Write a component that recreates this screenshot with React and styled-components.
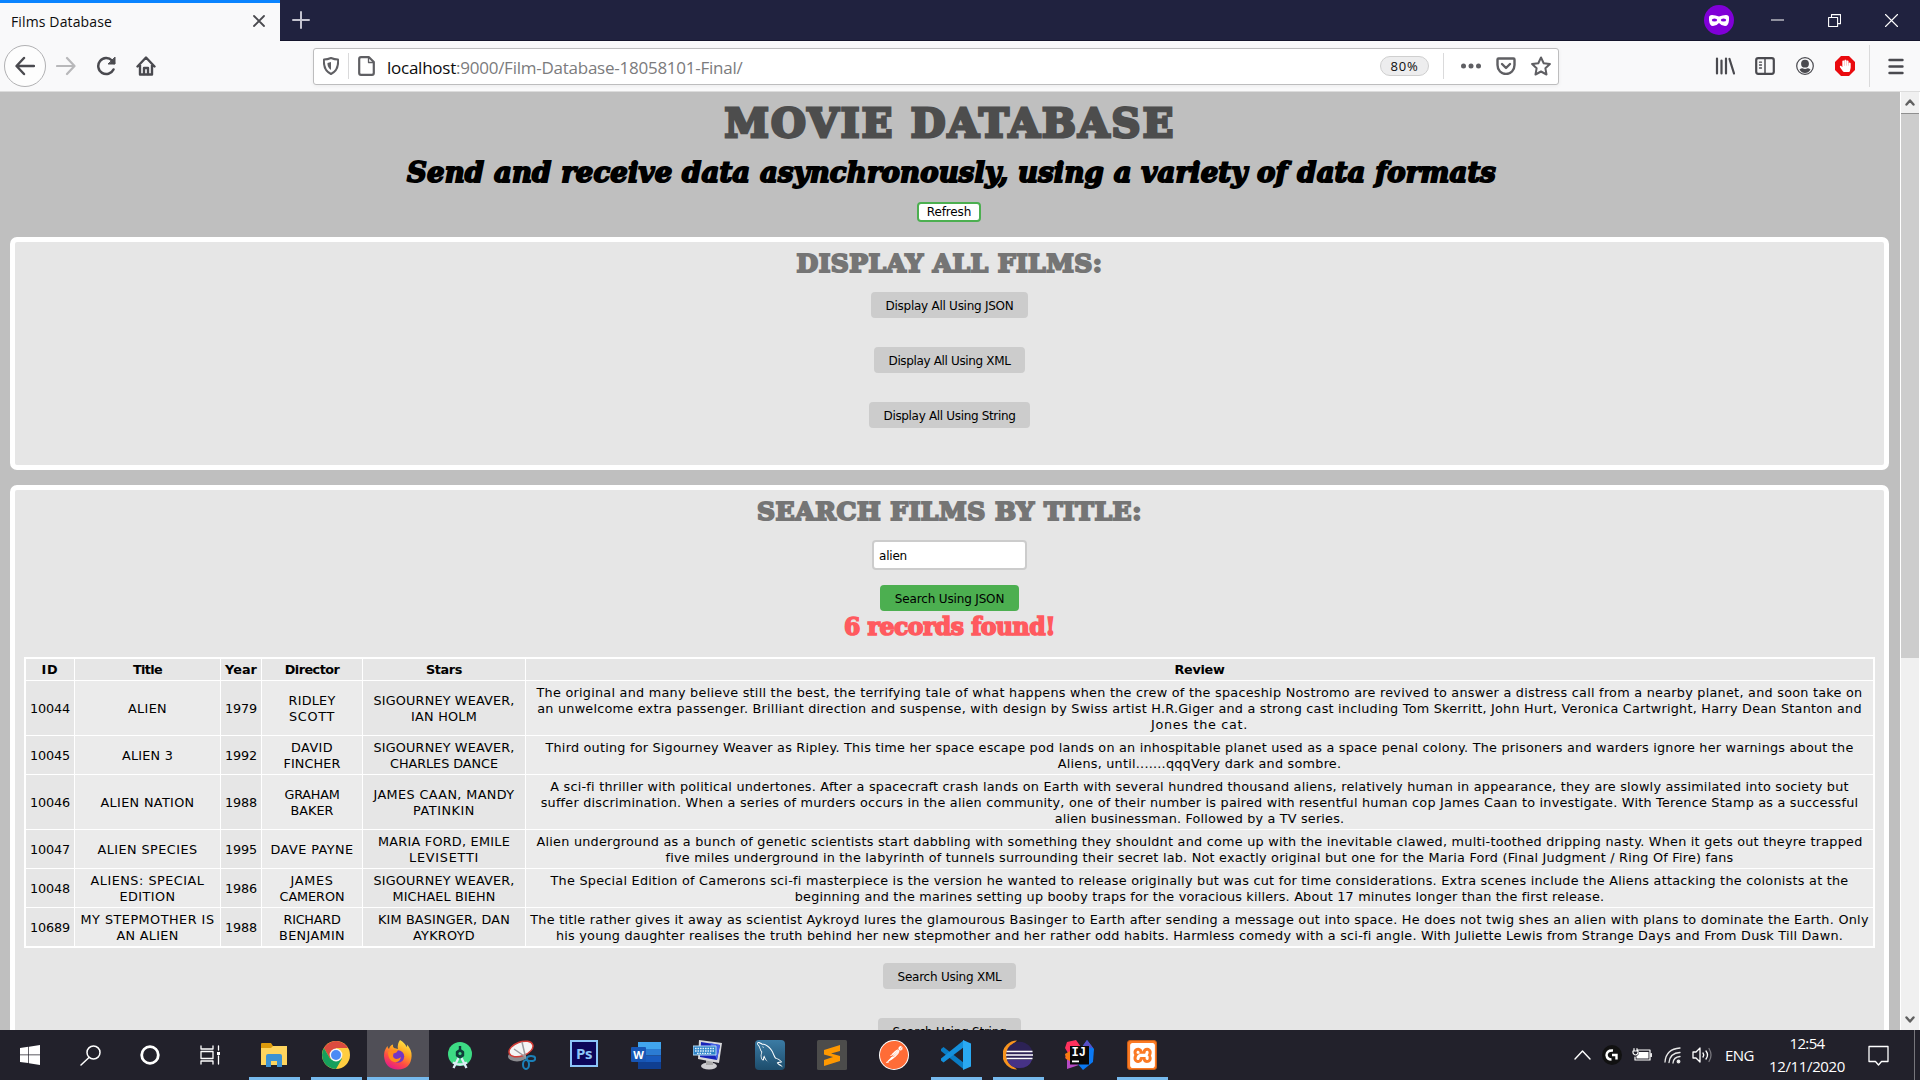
import React, { useLayoutEffect, useRef, useState } from "react";
import styled, { createGlobalStyle } from "styled-components";
import { SiXampp, SiPostman } from "react-icons/si";
import { GrMysql } from "react-icons/gr";
import { FaHandPaper } from "react-icons/fa";

const GlobalStyle = createGlobalStyle`
  * { box-sizing: border-box; }
  body { margin: 0; overflow: hidden; }
  svg { display: block; flex: none; }
`;

const ui = `"Open Sans", "Noto Sans", sans-serif`;
const verdana = `"DejaVu Sans", Verdana, sans-serif`;
const slab = `"DejaVu Serif", serif`;

const Screen = styled.div`
  width: 1920px;
  height: 1080px;
  display: flex;
  flex-direction: column;
  overflow: hidden;
  background: #bfbfbf;
  font-family: ${ui};
`;

const Row = styled.div`
  display: flex;
  align-items: center;
`;

const Slot = styled.div`
  width: ${(p) => p.$w || 40}px;
  height: 100%;
  flex: none;
  display: flex;
  align-items: center;
  justify-content: center;
`;

const Spacer = styled.div`
  flex: ${(p) => (p.$w ? `0 0 ${p.$w}px` : "1")};
`;

const TabBar = styled(Row)`
  height: 41px;
  flex: none;
  background: #20223f;
  border-bottom: 1px solid #14152c;
`;

const Tab = styled.div`
  width: 280px;
  height: 41px;
  align-self: flex-start;
  border-top: 3px solid #0a84ff;
  background: #f9f9fa;
  display: flex;
  align-items: center;
  justify-content: space-between;
  padding: 0 15px 2px 11px;
  font-size: 14px;
  color: #0c0c0d;
`;

const Toolbar = styled(Row)`
  height: 51px;
  flex: none;
  background: #f9f9fa;
  border-bottom: 1px solid #dcdcdc;
  padding-left: 4px;
`;

const BackCircle = styled.div`
  width: 42px;
  height: 42px;
  border: 1px solid #b1b1b3;
  border-radius: 50%;
  background: #fdfdfd;
  display: flex;
  align-items: center;
  justify-content: center;
`;

const UrlBar = styled.div`
  width: 1246px;
  height: 37px;
  border: 1px solid #bdbdbe;
  border-radius: 3px;
  background: #fff;
  box-shadow: 0 1px 4px rgba(0, 0, 0, 0.06);
  display: flex;
  align-items: center;
`;

const Url = styled.div`
  font-size: 17px;
  line-height: 24px;
  color: #7b7b7d;
  padding-top: 3px;
  b {
    font-weight: 400;
    color: #0c0c0d;
  }
`;

const Zoom = styled.div`
  width: 49px;
  height: 20px;
  border: 1px solid #cfcfcf;
  border-radius: 10px;
  background: #ededee;
  font-size: 13px;
  line-height: 19px;
  text-align: center;
  color: #0c0c0d;
`;

const Divider = styled.div`
  width: 1px;
  height: ${(p) => p.$h}px;
  background: ${(p) => p.$c || "#dadadb"};
`;

const Viewport = styled.div`
  height: 938px;
  flex: none;
  display: flex;
  overflow: hidden;
`;

const Page = styled.main`
  width: 1900px;
  height: 938px;
  overflow: hidden;
  background: #bfbfbf;
  font-family: ${verdana};
  font-size: 12.8px;
  color: #000;
  display: flex;
  flex-direction: column;
  align-items: center;
`;

const Title = styled.h1`
  margin: 0;
  height: 61px;
  flex: none;
  font: 700 40px/61px ${slab};
  color: #4d4d4d;
  -webkit-text-stroke: 3px #4d4d4d;
`;

const Subtitle = styled.h2`
  margin: 0 0 0 3px;
  height: 40px;
  flex: none;
  font: italic 700 27.5px/39px ${slab};
  color: #000;
  -webkit-text-stroke: 1.9px #000;
`;

const Refresh = styled.button`
  margin: 9px 2px 15px 0;
  width: 64px;
  height: 20px;
  flex: none;
  padding: 1px 0 0;
  border: 2px solid #4caf50;
  border-radius: 4px;
  background: #fff;
  font: 12px/15px ${verdana};
  color: #000;
`;

const Panel = styled.section`
  width: 1879px;
  height: ${(p) => p.$h}px;
  flex: none;
  margin: 0 0 15px -1px;
  border: 5px solid #fff;
  border-radius: 7px;
  background: #e6e6e6;
  display: flex;
  flex-direction: column;
  align-items: center;
`;

const PanelTitle = styled.h3`
  margin: 0 0 7px;
  height: 43px;
  flex: none;
  font: 700 25px/44px ${slab};
  color: #757575;
  -webkit-text-stroke: 2px #757575;
`;

const Found = styled.h3`
  margin: 2px 0 14px;
  height: 30px;
  flex: none;
  font: 700 23.5px/29px ${slab};
  color: #ff5a5f;
  -webkit-text-stroke: 1.6px #ff5a5f;
`;

const Action = styled.button`
  width: ${(p) => p.$w}px;
  height: 26px;
  flex: none;
  margin-bottom: ${(p) => (p.$active ? 0 : 29)}px;
  padding: 1px 0 0;
  border: 0;
  border-radius: 4px;
  background: ${(p) => (p.$active ? "#4caf50" : "#cccccc")};
  font: 12px/16px ${verdana};
  color: #000;
`;

const SearchInput = styled.div`
  width: 155px;
  height: 30px;
  flex: none;
  margin-bottom: 15px;
  padding: 1px 0 0 5px;
  border: 2px solid #ccc;
  border-radius: 4px;
  background: #fff;
  font: 12px/26px ${verdana};
`;

const Table = styled.table`
  width: 1851px;
  flex: none;
  margin-bottom: 15px;
  table-layout: fixed;
  border: 1px solid #fff;
  border-spacing: 1px;
  background: #fff;
  font: 12.8px/16px ${verdana};
  text-align: center;
`;

const Th = styled.th`
  height: 21px;
  padding: 1px 0 0;
  background: #e6e6e6;
`;

const Td = styled.td`
  height: ${(p) => p.$h}px;
  padding: 1px 0 0;
  background: ${(p) => (p.$odd ? "#ebebeb" : "#e6e6e6")};
`;

const Line = styled.span`
  display: block;
  width: max-content;
  margin: 0 auto;
  white-space: nowrap;
`;

const InlineLine = styled(Line)`
  display: inline-block;
  margin: 0;
`;

/* Spreads its text over the given width by adjusting the tracking. */
function Fit({ w, inline, children }) {
  const ref = useRef(null);
  const [ls, setLs] = useState(0);
  useLayoutEffect(() => {
    const el = ref.current;
    const n = el.textContent.length;
    el.style.letterSpacing = "0px";
    const natural = el.getBoundingClientRect().width;
    const value = (w - natural) / n;
    el.style.letterSpacing = `${value}px`;
    setLs(value);
  }, [w]);
  const Tag = inline ? InlineLine : Line;
  return (
    <Tag ref={ref} style={{ letterSpacing: `${ls}px` }}>
      {children}
    </Tag>
  );
}

const Scrollbar = styled.div`
  width: 20px;
  height: 938px;
  flex: none;
  border-left: 1px solid #fff;
  border-right: 1px solid #fff;
  background: #f0f0f0;
  display: flex;
  flex-direction: column;
`;

const ScrollButton = styled.div`
  height: 21px;
  display: flex;
  align-items: center;
  justify-content: center;
  background: #f0f0f0;
`;

const Thumb = styled.div`
  height: 545px;
  margin-bottom: auto;
  background: #cdcdcd;
  border-top: 1px solid #8f8f8f;
`;

const Taskbar = styled(Row)`
  height: 50px;
  flex: none;
  background: #22212b;
  color: #fff;
`;

const AppSlot = styled.div`
  width: 62px;
  height: 50px;
  flex: none;
  display: flex;
  flex-direction: column;
  align-items: center;
  background: ${(p) => (p.$active ? "#504f57" : "transparent")};
`;

const AppIcon = styled.div`
  height: 47px;
  padding-top: 3px;
  display: flex;
  align-items: center;
`;

const Running = styled.div`
  width: ${(p) => (p.$active ? 62 : 51)}px;
  height: 3px;
  background: #76b9ed;
`;

const Tile = styled.div`
  width: 30px;
  height: 30px;
  display: flex;
  align-items: center;
  justify-content: center;
  border-radius: ${(p) => p.$r || 0};
  background: ${(p) => p.$bg};
  border: ${(p) => p.$line || "0"};
  color: ${(p) => p.$fg || "#fff"};
`;

const PsTile = styled.div`
  width: 28px;
  height: 27px;
  margin-bottom: 3px;
  border: 2px solid #8cc5f8;
  background: #0c0659;
  color: #8cc5f8;
  font: 700 15px/22px "Open Sans", sans-serif;
  text-align: center;
  letter-spacing: -0.5px;
`;

const Lang = styled.div`
  width: 28px;
  font-size: 15px;
  margin-left: 9px;
`;

const Clock = styled.div`
  width: 76px;
  margin-left: 16px;
  font-size: 15px;
  line-height: 23px;
  text-align: center;
`;

const S = ({ w = 20, h, vb, children, sw = 2, c = "#4a4a4f" }) => (
  <svg width={w} height={h || w} viewBox={vb || `0 0 ${w} ${h || w}`} fill="none" stroke={c} strokeWidth={sw} strokeLinecap="round" strokeLinejoin="round">
    {children}
  </svg>
);

const films = [
  [54, [["10044", 40]], [["ALIEN", 39]], [["1979", 32]], [["RIDLEY", 47], ["SCOTT", 46]],
    [["SIGOURNEY WEAVER,", 141], ["IAN HOLM", 66]],
    [["The original and many believe still the best, the terrifying tale of what happens when the crew of the spaceship Nostromo are revived to answer a distress call from a nearby planet, and soon take on", 1326],
      ["an unwelcome extra passenger. Brilliant direction and suspense, with design by Swiss artist H.R.Giger and a strong cast including Tom Skerritt, John Hurt, Veronica Cartwright, Harry Dean Stanton and", 1324.5],
      ["Jones the cat.", 97]]],
  [38, [["10045", 40]], [["ALIEN 3", 51]], [["1992", 32]], [["DAVID", 42], ["FINCHER", 57]],
    [["SIGOURNEY WEAVER,", 141], ["CHARLES DANCE", 108]],
    [["Third outing for Sigourney Weaver as Ripley. This time her space escape pod lands on an inhospitable planet used as a space penal colony. The prisoners and warders ignore her warnings about the", 1308],
      ["Aliens, until.......qqqVery dark and sombre.", 283.5]]],
  [54, [["10046", 40]], [["ALIEN NATION", 94]], [["1988", 32]], [["GRAHAM", 55], ["BAKER", 43]],
    [["JAMES CAAN, MANDY", 141], ["PATINKIN", 62]],
    [["A sci-fi thriller with political undertones. After a spacecraft crash lands on Earth with several hundred thousand aliens, relatively human in appearance, they are slowly assimilated into society but", 1298.5],
      ["suffer discrimination. When a series of murders occurs in the alien community, one of their number is paired with resentful human cop James Caan to investigate. With Terence Stamp as a successful", 1317.5],
      ["alien businessman. Followed by a TV series.", 289.5]]],
  [38, [["10047", 40]], [["ALIEN SPECIES", 100]], [["1995", 32]], [["DAVE PAYNE", 83]],
    [["MARIA FORD, EMILE", 132], ["LEVISETTI", 70]],
    [["Alien underground as a bunch of genetic scientists start dabbling with something they shouldnt and come up with the inevitable clawed, multi-toothed dripping nasty. When it gets out theyre trapped", 1326],
      ["five miles underground in the labyrinth of tunnels surrounding their secret lab. Not exactly original but one for the Maria Ford (Final Judgment / Ring Of Fire) fans", 1068]]],
  [38, [["10048", 40]], [["ALIENS: SPECIAL", 114], ["EDITION", 56]], [["1986", 32]], [["JAMES", 43], ["CAMERON", 65]],
    [["SIGOURNEY WEAVER,", 141], ["MICHAEL BIEHN", 103]],
    [["The Special Edition of Camerons sci-fi masterpiece is the version he wanted to release originally but was cut for time considerations. Extra scenes include the Aliens attacking the colonists at the", 1298],
      ["beginning and the marines setting up booby traps for the voracious killers. About 17 minutes longer than the first release.", 809.5]]],
  [38, [["10689", 40]], [["MY STEPMOTHER IS", 134], ["AN ALIEN", 62]], [["1988", 32]], [["RICHARD", 57], ["BENJAMIN", 66]],
    [["KIM BASINGER, DAN", 132], ["AYKROYD", 62]],
    [["The title rather gives it away as scientist Aykroyd lures the glamourous Basinger to Earth after sending a message out into space. He does not twig shes an alien with plans to dominate the Earth. Only", 1338.5],
      ["his young daughter realises the truth behind her new stepmother and her rather odd habits. Harmless comedy with a sci-fi angle. With Juliette Lewis from Strange Days and From Dusk Till Dawn.", 1287]]],
];
const heads = [["ID", 17], ["Title", 29], ["Year", 32], ["Director", 54.5], ["Stars", 36], ["Review", 50]];
const colWidths = [48, 145, 40, 100, 162, 1347];

const Explorer = () => (
  <svg width="28" height="26" viewBox="0 0 28 26">
    <path d="M1 2q0-1 1-1h9l2 3h13v6H1z" fill="#dd9b0c" />
    <path d="M1 6h10l2-2h14v19H1z" fill="#ffd55e" />
    <path d="M6 25V14q0-2 2-2h12q2 0 2 2v11h-5v-6h-6v6z" fill="#3c92d4" />
  </svg>
);
const Chrome = () => (
  <svg width="28" height="28" viewBox="0 0 28 28">
    <circle cx="14" cy="14" r="14" fill="#ffcd40" />
    <path d="M14 14 8 17.5 1.9 7A14 14 0 0 1 26.1 7H14z" fill="#db4b3f" />
    <path d="M1.9 7A14 14 0 0 0 14 28l6-10.5H8z" fill="#169f5c" />
    <circle cx="14" cy="14" r="6.4" fill="#f5f5f5" />
    <circle cx="14" cy="14" r="5" fill="#4a8af4" />
  </svg>
);
const Firefox = () => (
  <svg width="30" height="30" viewBox="0 0 30 30">
    <defs>
      <linearGradient id="fx" x1=".8" y1="0" x2=".3" y2="1">
        <stop offset="0" stopColor="#fff04a" /><stop offset=".4" stopColor="#ffa322" /><stop offset=".7" stopColor="#ff4a45" /><stop offset="1" stopColor="#e0188f" />
      </linearGradient>
    </defs>
    <path d="M17 0q5 3 6.500 7 1-1 .5-2.500Q29 10 28.600 16 28 29 15 29.600 2 29 1 16 1 10 4.500 6q0 2 1.500 3 1-4 4-4.500-.5 2 1 3.500l4 1Q14 4 17 0z" fill="url(#fx)" />
    <circle cx="15" cy="16.500" r="6.200" fill="#7436c4" />
    <path d="M5 12q4-3 10-2-1 3-4.500 3.500Q9 18 13 19q3 0 5-2-1 6-7 5-6-2-6-10z" fill="#ff8b1c" />
  </svg>
);
const AndroidStudio = () => (
  <svg width="26" height="30" viewBox="0 0 26 30">
    <circle cx="13" cy="14" r="12" fill="#3ddc84" />
    <path d="M13 6v4M13 10l3 2v3.500l-3 2-3-2V12z" fill="#0f4d3a" stroke="#0f3d3a" strokeWidth="2.400" strokeLinejoin="round" />
    <circle cx="13" cy="13.500" r="1.500" fill="#3ddc84" />
    <path d="M11.500 18 6.500 28M14.500 18l5 10M6 22.500q7 4 14 0" stroke="#dcecf5" strokeWidth="2.300" fill="none" />
  </svg>
);
const Snip = () => (
  <svg width="28" height="30" viewBox="0 0 28 30">
    <ellipse cx="9" cy="16.500" rx="9" ry="5" fill="#8c8c90" />
    <ellipse cx="13" cy="9" rx="12.500" ry="7" transform="rotate(-20 13 9)" fill="#f4f4f4" stroke="#d23b35" strokeWidth="1.500" />
    <path d="M14 2 18 19M6 9 19 18" stroke="#9a9a9e" strokeWidth="1.500" />
    <ellipse cx="23" cy="18.500" rx="4.200" ry="2.600" fill="none" stroke="#1b80b8" strokeWidth="2" />
    <ellipse cx="18" cy="24.500" rx="3" ry="4.500" fill="none" stroke="#1b80b8" strokeWidth="2" />
  </svg>
);
const Word = () => (
  <svg width="30" height="27" viewBox="0 0 30 27">
    <path d="M7 0h23v7H7z" fill="#41a5ee" /><path d="M7 7h23v6.500H7z" fill="#2b7cd3" />
    <path d="M7 13.500h23V20H7z" fill="#185abd" /><path d="M7 20h23v7H7z" fill="#103f91" />
    <rect y="5" width="15" height="15" rx="1" fill="#1756b5" />
    <text x="7.500" y="16.500" textAnchor="middle" fontSize="11" fontWeight="700" fontFamily="Open Sans" fill="#fff">W</text>
  </svg>
);
const Keyboard = () => (
  <svg width="30" height="30" viewBox="0 0 30 30">
    <ellipse cx="16" cy="26" rx="8" ry="3.500" fill="#cfcfd2" /><path d="M13 20h7v5h-7z" fill="#aaa" />
    <path d="m6 0 23 3-3 20L5 19z" fill="#d7d7da" /><path d="m8 2 19 3-3 15L7 17z" fill="#1723b8" />
    <path d="m17 3 10 2-3 15z" fill="#4260e6" />
    <path d="M0 6h23v9H0z" fill="#2c83c7" stroke="#b8dbf3" />
    <path d="M2 8.500h19M2 11h19M4 13.300h15" stroke="#e3f1fb" strokeWidth="1.300" strokeDasharray="1.600 .9" />
  </svg>
);
const Sublime = () => (
  <svg width="30" height="30" viewBox="0 0 30 30">
    <rect width="30" height="30" rx="1.500" fill="#4c4c4b" />
    <path d="m7 10 16-5v6l-9 2.500 9 2.500v5L7 26v-6l9-3-9-2.500z" fill="#ff9800" />
  </svg>
);
const VSCode = () => (
  <svg width="30" height="30" viewBox="0 0 30 30">
    <path d="m0 9 2.500-2L23 23v6.500L0 11z" fill="#0a7cc4" />
    <path d="m0 20.500 2.500 2L23 7V0L0 18.500z" fill="#1490dc" />
    <path d="M22 0l8 3.500v23L22 30z" fill="#2aa9f2" />
  </svg>
);
const Eclipse = () => (
  <svg width="30" height="30" viewBox="0 0 30 30">
    <path d="M14 0.500a14.500 14.500 0 0 0 0 29Q-4 15 14 .5z" fill="#f7941e" />
    <circle cx="16.500" cy="15" r="13.300" fill="#2c2255" />
    <path d="M4 20h25q-3 8-12.500 8T4 20z" fill="#463286" />
    <path d="M3.500 11.500h26M3 15h27M3.500 18.500h26" stroke="#fff" strokeWidth="1.700" />
  </svg>
);
const IntelliJ = () => (
  <svg width="30" height="30" viewBox="0 0 30 30">
    <path d="m2 2 9-2 5 7-9 15-7-4 3-5-3-5z" fill="#fe315d" /><path d="m2 20 5-5 7 10-12 4z" fill="#b74ac4" />
    <path d="m0 14 5-3v10l-4-2z" fill="#f97a12" />
    <path d="m17 7 5-7 7 9-1 13-10 8-6-7z" fill="#0b79f3" /><path d="m17 7 5-7 6 8z" fill="#5a4fc6" />
    <path d="M5 6h19v18.500H5z" fill="#080808" />
    <text x="6.500" y="16" fontSize="12" fontWeight="700" fontFamily="Liberation Mono" fill="#fff">IJ</text>
    <path d="M7 20.500h7v1.800H7z" fill="#fff" />
  </svg>
);

const apps = [
  [<Explorer />, 1], [<Chrome />, 1], [<Firefox />, 1, 1], [<AndroidStudio />], [<Snip />],
  [<PsTile>Ps</PsTile>], [<Word />], [<Keyboard />],
  [<Tile $bg="linear-gradient(#3b7ba4,#1d4d6c)" $r="4px"><GrMysql size={26} /></Tile>],
  [<Sublime />],
  [<Tile $bg="#fff" $r="50%" $fg="#ff6c37"><SiPostman size={28} /></Tile>],
  [<VSCode />, 1], [<Eclipse />, 1], [<IntelliJ />],
  [<Tile $bg="#fb7a24" $r="3px" $line="1px solid #c95e16"><SiXampp size={25} /></Tile>, 1],
];

export default function App() {
  return (
    <Screen>
      <GlobalStyle />
      <TabBar>
        <Tab>
          <Fit w={101}>Films Database</Fit>
          <Spacer />
          <S w={12} sw={1.8}><path d="M1 1l10 10M11 1 1 11" /></S>
        </Tab>
        <Slot $w={42}><S w={18} c="#c4c4d0"><path d="M9 1v16M1 9h16" /></S></Slot>
        <Spacer />
        <Slot $w={32}>
          <svg width="30" height="30" viewBox="0 0 30 30">
            <circle cx="15" cy="15" r="15" fill="#8000d7" />
            <path d="M5 12.500q0-2.500 3-2.500 3.500 0 7 1.500 3.500-1.500 7-1.500 3 0 3 2.500V15q-.5 6-4 6-3.500 0-6-3-2.500 3-6 3-3.500 0-4-6z" fill="#fff" />
            <ellipse cx="10.500" cy="15" rx="2.700" ry="1.500" fill="#8000d7" /><ellipse cx="19.500" cy="15" rx="2.700" ry="1.500" fill="#8000d7" />
          </svg>
        </Slot>
        <Spacer $w={14} />
        <Slot $w={57}><S w={13} sw={1.200} c="#fff"><path d="M.5 6h12" /></S></Slot>
        <Slot $w={57}><S w={13} sw={1.100} c="#fff"><path d="M.6 3.500h9v9h-9zM3.500 3.500V.6h9v9h-3" /></S></Slot>
        <Slot $w={57}><S w={13} sw={1.100} c="#fff"><path d="M.5.5l12 12M12.500.5l-12 12" /></S></Slot>
      </TabBar>
      <Toolbar>
        <BackCircle><S w={20} sw={2.400}><path d="M19 10H2M9 2 1.500 10 9 18" /></S></BackCircle>
        <Slot><S w={20} sw={2.200} c="#b8b8ba"><path d="M1 10h17M11 2l7.500 8-7.500 8" /></S></Slot>
        <Slot><S w={20} sw={2.500}><path d="M17.500 13.500A8 8 0 1 1 16 4.500L18 7" /><path d="M19 1.500V8h-6.500z" fill="#4a4a4f" strokeWidth="1" /></S></Slot>
        <Slot><S w={20} sw={2.400}><path d="M1.500 10.500 10 1.500l8.500 9M4 9v9.500h12V9" /><path d="M8 18v-6h4v6" /></S></Slot>
        <Spacer $w={147} />
        <UrlBar>
          <Slot $w={34}><S w={16} h={18} c="#5f5f63"><path d="M8 1q3.500 1.500 7 1.500Q16 13 8 17 0 13 1 2.500 4.500 2.500 8 1z" /><path d="M8 5v8q-4-3-3.500-7z" fill="#5f5f63" stroke="none" /></S></Slot>
          <Divider $h={26} />
          <Slot $w={35}><S w={17} h={20} c="#5f5f63" sw={2.200}><path d="M3 1.200h8L15.800 6v11q0 1.800-1.800 1.800H3q-1.800 0-1.800-1.800V3Q1.200 1.200 3 1.200z" /><path d="M10.500 2v4.500H15" strokeWidth="1.300" /></S></Slot>
          <Spacer $w={3} />
          <Url><Fit w={355.5}><b>localhost</b>:9000/Film-Database-18058101-Final/</Fit></Url>
          <Spacer />
          <Zoom><Fit w={28}>80%</Fit></Zoom>
          <Spacer $w={14} />
          <Divider $h={26} />
          <Spacer $w={9} />
          <Slot $w={35}><svg width="22" height="6" fill="#5f5f63"><circle cx="3.500" cy="3" r="2.500" /><circle cx="11" cy="3" r="2.500" /><circle cx="18.500" cy="3" r="2.500" /></svg></Slot>
          <Slot $w={35}><S w={20} h={18} c="#5f5f63" sw={2.400}><path d="M2.500 1.500h15q1 0 1 1V8q0 4-2.500 6.500T10 17t-6-2.500Q1.500 12 1.500 8V2.500q0-1 1-1z" /><path d="m6 7 4 4 4-4" /></S></Slot>
          <Slot $w={35}><S w={20} c="#5f5f63"><path d="m10 1.500 2.700 5.700 6.200.8-4.500 4.300 1.100 6.200L10 15.500l-5.500 3 1.100-6.200L1.100 8l6.200-.8z" /></S></Slot>
        </UrlBar>
        <Spacer $w={146} />
        <Slot><S w={20} h={18} sw={2.200}><path d="M2 1.500v15M6.500 3.500v13M11 1.500v15M14.500 2 19 16.500" /></S></Slot>
        <Slot><S w={20} h={18} sw={2.200}><rect x="1.200" y="1.200" width="17.600" height="15.600" rx="2" /><path d="M10 1.500v15" strokeWidth="1.500" /><path d="M4.500 5.200h2M4.500 8h2M4.500 11h2" strokeWidth="1.300" /></S></Slot>
        <Slot><svg width="18" height="18" viewBox="0 0 18 18"><circle cx="9" cy="9" r="8.300" fill="none" stroke="#4a4a4f" strokeWidth="1.200" /><circle cx="9" cy="6.700" r="3.900" fill="#4a4a4f" /><path d="M3.500 12.500q2-1.500 3-1.200 2.500 1.200 5 0 1-.3 3 1.200Q12.500 16 9 16t-5.500-3.500z" fill="#4a4a4f" /></svg></Slot>
        <Slot>
          <svg width="20" height="20" viewBox="0 0 20 20">
            <path d="M6 0h8l6 6v8l-6 6H6l-6-6V6z" fill="#ea0a0e" />
            <FaHandPaper x="4" y="3.500" size={12.500} color="#fff" />
          </svg>
        </Slot>
        <Spacer $w={4} />
        <Divider $h={42} />
        <Spacer $w={6} />
        <Slot><S w={16} h={17} sw={2.400}><path d="M1.500 2h13M1.500 8.500h13M1.500 15h13" /></S></Slot>
      </Toolbar>
      <Viewport>
        <Page>
          <Title><Fit w={451}>MOVIE DATABASE</Fit></Title>
          <Subtitle><Fit w={1089}>Send and receive data asynchronously, using a variety of data formats</Fit></Subtitle>
          <Refresh><Fit w={44.5}>Refresh</Fit></Refresh>
          <Panel $h={233}>
            <PanelTitle><Fit w={306}>DISPLAY ALL FILMS:</Fit></PanelTitle>
            <Action $w={157}><Fit w={128}>Display All Using JSON</Fit></Action>
            <Action $w={151}><Fit w={122}>Display All Using XML</Fit></Action>
            <Action $w={161}><Fit w={132}>Display All Using String</Fit></Action>
          </Panel>
          <Panel $h={620}>
            <PanelTitle><Fit w={385}>SEARCH FILMS BY TITLE:</Fit></PanelTitle>
            <SearchInput><Fit inline w={28}>alien</Fit></SearchInput>
            <Action $w={139} $active><Fit w={109.5}>Search Using JSON</Fit></Action>
            <Found><Fit w={211}>6 records found!</Fit></Found>
            <Table>
              <colgroup>{colWidths.map((w) => <col key={w} width={w} />)}</colgroup>
              <thead>
                <tr>{heads.map(([t, w]) => <Th key={t}><Fit w={w}>{t}</Fit></Th>)}</tr>
              </thead>
              <tbody>
                {films.map(([h, ...cells]) => (
                  <tr key={cells[0][0][0]}>
                    {cells.map((lines, i) => (
                      <Td key={i} $h={h} $odd={i % 2 === 1}>
                        {lines.map(([t, w]) => <Fit key={t} w={w}>{t}</Fit>)}
                      </Td>
                    ))}
                  </tr>
                ))}
              </tbody>
            </Table>
            <Action $w={133}><Fit w={104}>Search Using XML</Fit></Action>
            <Action $w={143}><Fit w={114}>Search Using String</Fit></Action>
          </Panel>
        </Page>
        <Scrollbar>
          <ScrollButton><S w={10} h={7} c="#606060" sw={2.400}><path d="m1.500 5.500 3.500-4 3.500 4" /></S></ScrollButton>
          <Thumb />
          <ScrollButton><S w={10} h={7} c="#606060" sw={2.400}><path d="m1.500 1.500 3.500 4 3.500-4" /></S></ScrollButton>
        </Scrollbar>
      </Viewport>
      <Taskbar>
        <Slot $w={60}><svg width="20" height="20" viewBox="0 0 20 20" fill="#fff"><path d="M0 3l8.300-1.200v7.700H0zM9 1.700 20 0v9.500H9zM0 10.300h8.300V18L0 17zM9 10.300h11V20L9 18.300z" /></svg></Slot>
        <Slot $w={60}><S w={21} c="#fff" sw={1.500}><circle cx="13.500" cy="7.500" r="6.500" /><path d="M9 12.500 1 20" /></S></Slot>
        <Slot $w={60}><S w={20} c="#fff" sw={2.800}><circle cx="10" cy="10" r="8.300" /></S></Slot>
        <Slot $w={60}><S w={21} h={20} c="#fff" sw={1.300}><path d="M1 1v3h12V1M1 19v-3h12v3M1 6.500h12v7H1zM18.500 1v4M18.500 11v8" /><path d="M17 7h3v3h-3z" fill="#fff" stroke="none" /></S></Slot>
        <Spacer $w={3} />
        {apps.map(([icon, running, active], i) => (
          <AppSlot key={i} $active={active}>
            <AppIcon>{icon}</AppIcon>
            {running && <Running $active={active} />}
          </AppSlot>
        ))}
        <Spacer />
        <Slot $w={30}><S w={17} h={10} c="#fff" sw={1.400}><path d="m1 9 7.500-8L16 9" /></S></Slot>
        <Slot $w={30}><svg width="20" height="20" viewBox="0 0 20 20"><circle cx="10" cy="10" r="10" fill="#111" /><path d="M11 5.500Q5 5 4.500 10q.5 4.500 5 4.500M10 10h4.500v4.500" fill="none" stroke="#fff" strokeWidth="2.400" /></svg></Slot>
        <Slot $w={30}><S w={20} h={14} c="#fff" sw={1.200}><path d="M5 2h13v10H3V9M19.300 5.500v3M2 .7v2M5 .7v2M1 3h5v2q-1 2-2.500 2T1 5z" /><path d="M7 4h9.500v6.500h-12V8Q7 7 7 4z" fill="#fff" stroke="none" /></S></Slot>
        <Slot $w={31}><S w={17} h={17} c="#e8e8e8" sw={1.300}><path d="M1 15Q2 2 16 1M5 15.500Q6 6 16 5.500M9 16q.500-6 7-6.500" /><circle cx="14.500" cy="14.500" r="1.300" fill="#fff" /></S></Slot>
        <Slot $w={28}><S w={21} h={18} c="#fff" sw={1.300}><path d="M1 6h3l4-4v14l-4-4H1zM11 7q1.500 2 0 4M14 5q3 4 0 8" /><path d="M17 2.500q4 6.500 0 13" stroke="#77767c" /></S></Slot>
        <Lang><Fit w={29}>ENG</Fit></Lang>
        <Clock><Fit w={35}>12:54</Fit><Fit w={76}>12/11/2020</Fit></Clock>
        <Spacer $w={23} />
        <S w={21} h={21} c="#fff" sw={1.300}><path d="M1 1.500h19v15h-6.500L10.500 20l-3-3.500H1z" /></S>
        <Spacer $w={25} />
        <Divider $h={50} $c="#77767c" />
        <Spacer $w={5} />
      </Taskbar>
    </Screen>
  );
}
